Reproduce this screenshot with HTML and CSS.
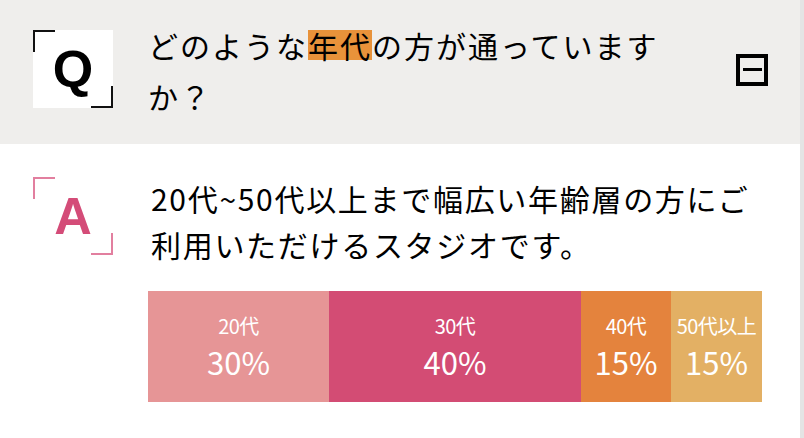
FILE: index.html
```html
<!DOCTYPE html>
<html lang="ja">
<head>
<meta charset="utf-8">
<title>FAQ</title>
<link rel="stylesheet" href="styles.css">
</head>
<body>
<div class="page">
  <section class="row q">
    <div class="mark mark-q">Q</div>
    <p class="q-text"><span>どのような</span><span class="hl">年代</span><span>の方が通っています</span><span>か？</span></p>
    <span class="toggle" aria-label="閉じる"></span>
  </section>
  <section class="row a">
    <div class="mark mark-a">A</div>
    <div class="a-body">
      <p class="a-text"><span>20代~50代以上まで幅広い年齢層の方にご</span><span>利用いただけるスタジオです。</span></p>
      <div class="chart">
        <div class="seg s20"><span class="lbl">20代</span><span class="pct">30%</span></div>
        <div class="seg s30"><span class="lbl">30代</span><span class="pct">40%</span></div>
        <div class="seg s40"><span class="lbl">40代</span><span class="pct">15%</span></div>
        <div class="seg s50"><span class="lbl">50代以上</span><span class="pct">15%</span></div>
      </div>
    </div>
  </section>
</div>
</body>
</html>
```
FILE: styles.css
```css
html, body {
  margin: 0;
  padding: 0;
}
body {
  width: 804px;
  height: 438px;
  overflow: hidden;
  background: #fff;
}
.page {
  height: 438px;
  box-sizing: border-box;
  border-right: 4px solid #e4e4e4;
  font-family: "Noto Sans CJK JP", "Noto Sans", sans-serif;
  color: #000;
}
.row {
  display: flex;
  align-items: flex-start;
}
.q {
  background: #efeeec;
  height: 144px;
  box-sizing: border-box;
  padding: 20px 32px 0 33px;
}
.mark {
  position: relative;
  flex: none;
  width: 80px;
  height: 78px;
  display: flex;
  align-items: center;
  justify-content: center;
  font-family: "Liberation Sans", Arial, sans-serif;
  font-weight: 700;
  font-size: 52px;
  line-height: 1;
}
.mark::before,
.mark::after {
  content: "";
  position: absolute;
  width: 20px;
  height: 20px;
  border: 0 solid var(--br);
}
.mark::before {
  left: 0;
  top: 0;
  border-left-width: 2px;
  border-top-width: 2px;
}
.mark::after {
  right: 0;
  bottom: 0;
  border-right-width: 2px;
  border-bottom-width: 2px;
}
.mark-q {
  --br: #111;
  background: #fff;
  color: #000;
  margin-top: 10px;
}
.q-text {
  margin: 0 0 0 35px;
  width: 520px;
  font-size: 30px;
  line-height: 51px;
  letter-spacing: 2px;
}
.hl {
  background: linear-gradient(to bottom, transparent 0, transparent 7px, #e8923a 7px, #e8923a 37px, transparent 37px);
}
.toggle {
  position: relative;
  flex: none;
  width: 32px;
  height: 32px;
  box-sizing: border-box;
  border: 4px solid #000;
  margin: 34px 0 0 auto;
}
.toggle::before {
  content: "";
  position: absolute;
  left: 3px;
  top: 10px;
  width: 19px;
  height: 3px;
  background: #000;
}
.a {
  padding: 31px 38px 0 33px;
}
.mark-a {
  --br: #e27f9f;
  color: #d44c78;
  margin-top: 2px;
}
.a-body {
  margin-left: 35px;
  width: 614px;
}
.a-text {
  margin: 0;
  padding-left: 3px;
  font-size: 30px;
  line-height: 46px;
  letter-spacing: 1.7px;
}
.chart {
  display: grid;
  grid-template-columns: 181fr 252fr 90fr 91fr;
  height: 111px;
  margin-top: 24px;
  color: #fff;
}
.seg {
  display: flex;
  flex-direction: column;
  align-items: center;
  justify-content: center;
  gap: 5px;
  padding-top: 2px;
  font-weight: 400;
}
.lbl {
  font-size: 20px;
  line-height: 24px;
  white-space: nowrap;
  letter-spacing: -0.5px;
}
.pct {
  font-size: 31px;
  line-height: 38px;
}
.s20 { background: #e69596; }
.s30 { background: #d34c74; }
.s40 { background: #e4833d; }
.s50 { background: #e3b064; }
```
